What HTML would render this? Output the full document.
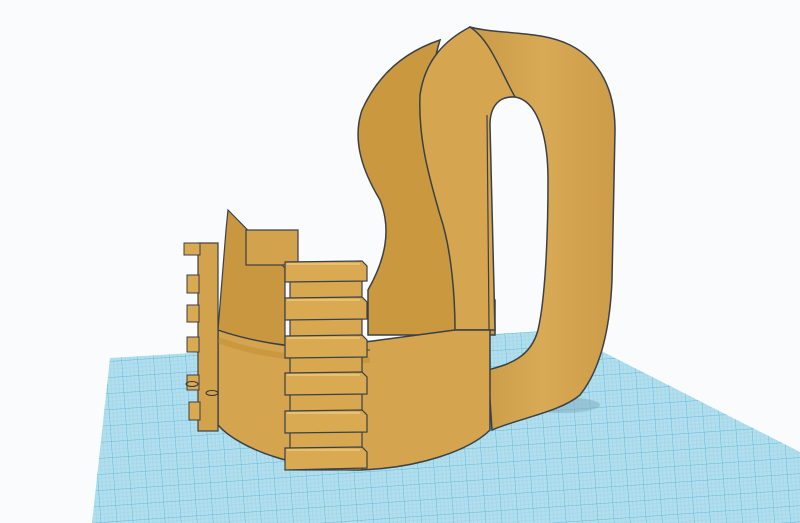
<!DOCTYPE html>
<html><head><meta charset="utf-8"><style>
html,body{margin:0;padding:0;width:800px;height:523px;overflow:hidden;background:#fafbfc}
svg{display:block}
</style></head><body>
<svg width="800" height="523" viewBox="0 0 800 523" xmlns="http://www.w3.org/2000/svg">
<defs>
<pattern id="g" width="16" height="16" patternUnits="userSpaceOnUse" patternTransform="rotate(-4)">
<rect width="16" height="16" fill="#b2dfee"/>
<path d="M0 4H16M0 8H16M0 12H16M4 0V16M8 0V16M12 0V16" stroke="#9fd4e6" stroke-width="0.6"/>
<path d="M0 0H16M0 0V16" stroke="#62b9d8" stroke-width="1"/>
</pattern>
<linearGradient id="hd" x1="0" x2="1"><stop offset="0" stop-color="#c99a45"/><stop offset="0.5" stop-color="#d9aa55"/><stop offset="1" stop-color="#cc9c48"/></linearGradient>
</defs>
<rect width="800" height="523" fill="#fafbfc"/>
<polygon points="110,358 560,330 800,452 800,523 92,523" fill="url(#g)"/>
<ellipse cx="560" cy="405" rx="40" ry="8" fill="#7fa9c0" opacity="0.5"/>
<path d="M470,27 C500,35 540,30 570,45 C600,60 615,90 615,130 L612,280 C610,330 600,370 580,395 C560,412 520,418 492,430 L488,370 C505,365 530,360 538,330 C545,300 548,240 548,180 C548,130 535,100 515,97 C500,96 490,105 487,115 Z" fill="url(#hd)" stroke="#3a4048" stroke-width="1.5"/>
<path d="M440,40 C410,50 380,70 362,110 C352,140 362,170 380,200 C392,230 385,260 368,290 L368,335 L495,335 L495,300 C470,290 455,240 440,190 C428,140 425,90 440,40 Z" fill="#c9983f" stroke="#3a4048" stroke-width="1.5"/>
<path d="M470,27 C445,40 425,60 420,95 C418,140 430,180 440,215 C452,250 455,300 455,330 L495,330 L490,125 C490,105 500,96 515,97 C500,70 490,40 470,27 Z" fill="#d6a550" stroke="#3a4048" stroke-width="1.5"/>
<path d="M487,115 L490,430" stroke="#3a4048" stroke-width="1.2"/>
<path d="M218,328 C260,340 330,348 380,340 L455,330 L490,330 L490,430 C470,450 420,468 360,470 C300,470 240,450 218,425 Z" fill="#d5a44e" stroke="#3a4048" stroke-width="1.5"/>
<path d="M218,330 C260,345 320,352 370,350" stroke="#3a4048" stroke-width="1" fill="none"/>
<path d="M218,340 C260,356 320,362 370,360" stroke="#c9983f" stroke-width="6" fill="none"/>
<path d="M228,210 L285,268 L285,345 C260,342 235,336 218,330 L226,230 Z" fill="#c8973f" stroke="#3a4048" stroke-width="1.2"/>
<rect x="246" y="230" width="52" height="35" fill="#d3a24c" stroke="#3a4048" stroke-width="1.2"/>
<rect x="290" y="262" width="72" height="208" fill="#d8a850" stroke="#3a4048" stroke-width="1.2"/>
<g fill="#d9aa52" stroke="#3a4048" stroke-width="1.2">
<path d="M285,262 L362,261 L367,266 L367,281 L285,282 Z"/>
<path d="M285,298 L362,297 L367,302 L367,319 L285,320 Z"/>
<path d="M285,336 L362,335 L367,340 L367,357 L285,358 Z"/>
<path d="M285,373 L362,372 L367,377 L367,394 L285,395 Z"/>
<path d="M285,411 L362,410 L367,415 L367,432 L285,433 Z"/>
<path d="M285,448 L362,447 L367,452 L367,468 L285,470 Z"/>
</g>
<g stroke="#e8c072" stroke-width="2"><path d="M287,264H360M287,300H360M287,338H360M287,375H360M287,413H360M287,450H360"/></g>
<rect x="198" y="243" width="20" height="188" fill="#d3a24c" stroke="#3a4048" stroke-width="1.2"/>
<rect x="184" y="243" width="16" height="12" fill="#d9aa52" stroke="#3a4048" stroke-width="1"/>
<g fill="#d9aa52" stroke="#3a4048" stroke-width="1">
<rect x="187" y="275" width="12" height="18"/>
<rect x="187" y="305" width="12" height="17"/>
<rect x="187" y="337" width="12" height="15"/>
<rect x="187" y="375" width="12" height="15"/>
<rect x="189" y="402" width="11" height="18"/>
</g>
<ellipse cx="192" cy="384" rx="6" ry="2.5" fill="none" stroke="#333" stroke-width="1"/>
<ellipse cx="212" cy="393" rx="6" ry="2.5" fill="none" stroke="#333" stroke-width="1"/>
</svg>
</body></html>
